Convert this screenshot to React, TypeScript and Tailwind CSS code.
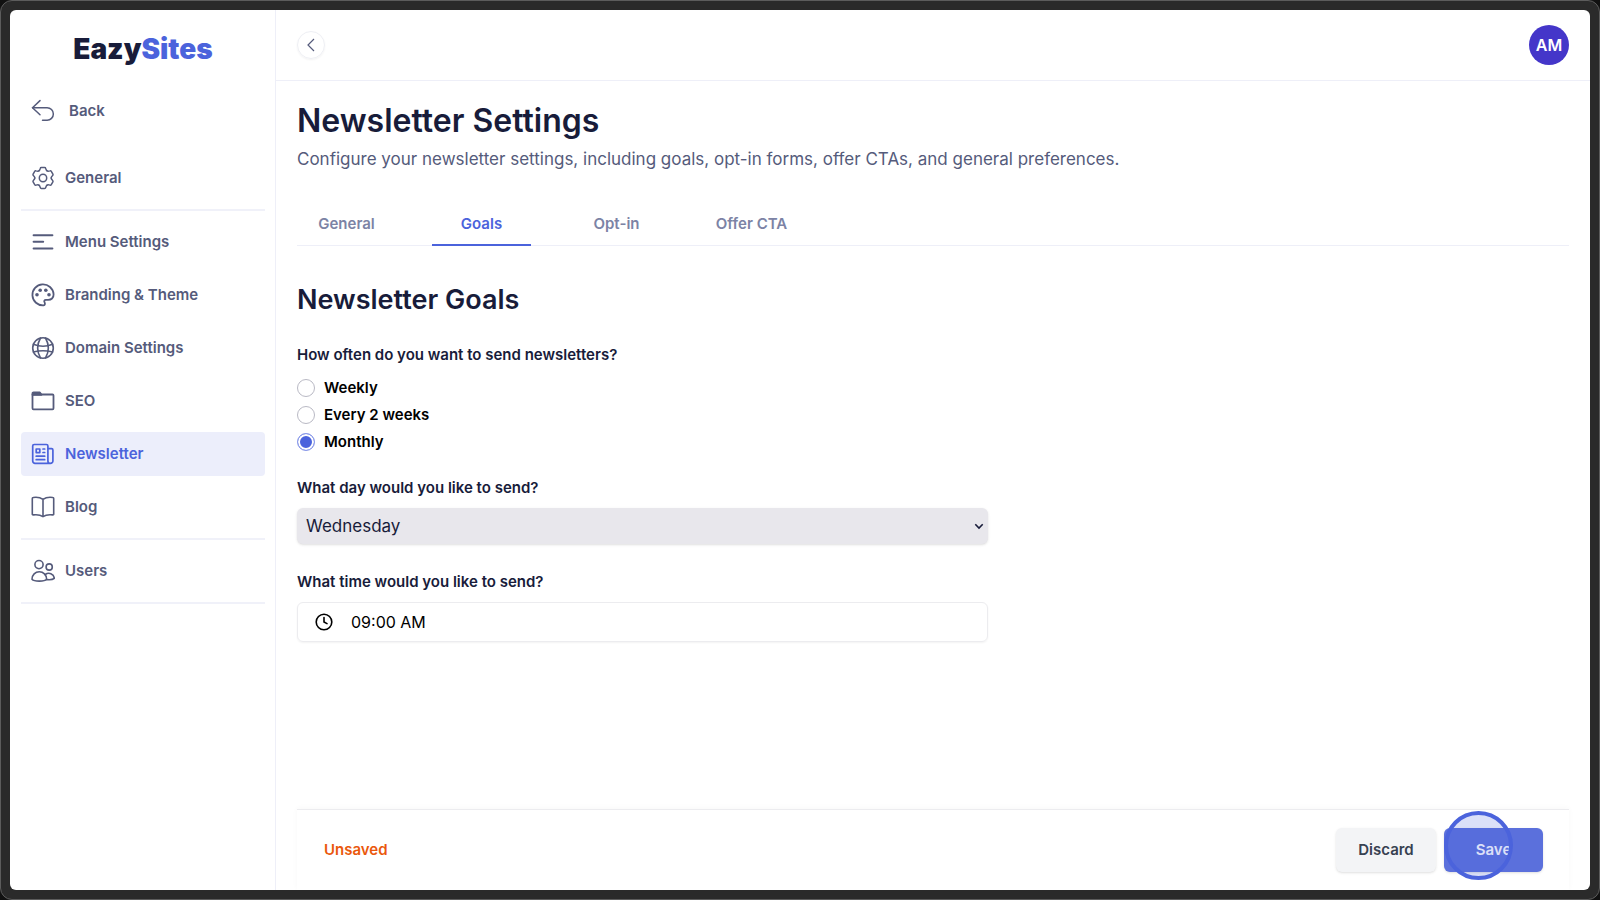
import { useState } from 'react'
import type { ReactNode } from 'react'

const iconProps = {
  width: 24,
  height: 24,
  viewBox: '0 0 24 24',
  fill: 'none',
  stroke: 'currentColor',
  strokeWidth: 1.5,
  strokeLinecap: 'round',
  strokeLinejoin: 'round',
  'aria-hidden': true,
} as const

const BackIcon = () => (
  <svg {...iconProps}>
    <path d="M9 1.6 1.5 8.7 9 15.8" />
    <path d="M1.5 8.7h14.6a6.2 6.2 0 0 1 0 12.5h-4.6" />
  </svg>
)

const GearIcon = () => (
  <svg {...iconProps}>
    {[0, 60, 120, 180, 240, 300].map((angle) => (
      <path
        key={angle}
        transform={`rotate(${angle} 12 12)`}
        d="M7.9 4.9C8.8 4.4 9 3.6 9.3 2.4Q9.5 1.5 10.4 1.5H13.6Q14.5 1.5 14.7 2.4C15 3.6 15.2 4.4 16.1 4.9"
      />
    ))}
    <circle cx="12" cy="12" r="3.7" />
  </svg>
)

const MenuIcon = () => (
  <svg {...iconProps} strokeWidth={2}>
    <path d="M2.6 5.2h18.8M2.6 11.8h9.6M2.6 18.6h18.8" />
  </svg>
)

const PaletteIcon = () => (
  <svg {...iconProps} strokeWidth={1.8}>
    <path d="M12.6 22.4a10.6 10.5 0 1 1 10-11.2c.1 4-2.4 5.6-5.4 5.6h-2.3c-1.6 0-2 1.2-1.4 2.3.8 1.5.5 3.2-.9 3.3z" />
    <g fill="currentColor" stroke="none">
      <circle cx="6" cy="11.7" r="1.8" />
      <circle cx="9.2" cy="7.2" r="1.8" />
      <circle cx="14.8" cy="7.2" r="1.8" />
      <circle cx="18" cy="11.7" r="1.8" />
    </g>
  </svg>
)

const GlobeIcon = () => (
  <svg {...iconProps} strokeWidth={1.6}>
    <circle cx="12" cy="12" r="10.3" />
    <path d="M9.5 2C5.8 8.5 5.8 15.5 9.5 22M14.5 2c3.7 6.5 3.7 13.5 0 20" />
    <path d="M2.4 8.2c5.8 2.4 13.4 2.4 19.2 0M2.4 16c5.8-1.5 13.4-1.5 19.2 0" />
  </svg>
)

const FolderIcon = () => (
  <svg {...iconProps} strokeWidth={1.8}>
    <path d="M1.5 5.5h20a1 1 0 0 1 1 1v12.8a1 1 0 0 1-1 1h-19a1 1 0 0 1-1-1z" />
    <path d="M1.5 5.8V4.4a1 1 0 0 1 1-1h6.4l1.6 2.4z" fill="currentColor" />
  </svg>
)

const NewsIcon = () => (
  <svg {...iconProps} strokeWidth={1.7}>
    <path d="M19.4 21.4H4a2.3 2.3 0 0 1-2.3-2.3V4A1.5 1.5 0 0 1 3.2 2.5h12.2A1.5 1.5 0 0 1 16.9 4v14.9a2.5 2.5 0 0 0 5 0V8a1.3 1.3 0 0 0-1.3-1.3h-3.7" />
    <path d="M5.2 7h3.6v3.6H5.2zM12 7h1.7M12 10.5h1.7M5.2 14.2h8.5M5.2 17.7h8.5" />
  </svg>
)

const BookIcon = () => (
  <svg {...iconProps} strokeWidth={1.6}>
    <path d="M12 4.4C9.5 2.6 5.5 2 2.2 2.5a1 1 0 0 0-.9 1V19a.8.8 0 0 0 .9.9c3.3-.4 7.3 0 9.8 1.7 2.5-1.7 6.5-2.1 9.8-1.7a.8.8 0 0 0 .9-.9V3.5a1 1 0 0 0-.9-1C18.5 2 14.5 2.6 12 4.4zM12 4.4v17.2" />
  </svg>
)

const UsersIcon = () => (
  <svg {...iconProps} strokeWidth={1.6}>
    <circle cx="8" cy="5.6" r="4.1" />
    <circle cx="18.2" cy="8" r="3.1" />
    <path d="M8.3 12.8c-4 0-7.3 3-7.3 7.5 2 2.4 12.6 2.4 14.6 0 0-4.5-3.3-7.5-7.3-7.5z" />
    <path d="M14.3 15.5c3.3-2.5 8.7-1 9 3.9-1.3 1.1-4.7 1.5-7.5 1.2" />
  </svg>
)

type Item = { label: string; icon: ReactNode; active?: boolean }

const groups: Item[][] = [
  [{ label: 'General', icon: <GearIcon /> }],
  [
    { label: 'Menu Settings', icon: <MenuIcon /> },
    { label: 'Branding & Theme', icon: <PaletteIcon /> },
    { label: 'Domain Settings', icon: <GlobeIcon /> },
    { label: 'SEO', icon: <FolderIcon /> },
    { label: 'Newsletter', icon: <NewsIcon />, active: true },
    { label: 'Blog', icon: <BookIcon /> },
  ],
  [{ label: 'Users', icon: <UsersIcon /> }],
]

const tabs = ['General', 'Goals', 'Opt-in', 'Offer CTA']
const frequencies = ['Weekly', 'Every 2 weeks', 'Monthly']
const days = ['Monday', 'Tuesday', 'Wednesday', 'Thursday', 'Friday', 'Saturday', 'Sunday']

function Sidebar() {
  return (
    <aside className="w-[266px] shrink-0 border-r border-[#eeeff8] pr-[10px] pl-[11px] text-[15px] font-semibold text-[#555b7b]">
      <div className="pt-[19px] text-center text-[28px] leading-10 font-black text-[#181c3a]">
        Eazy<span className="text-[#4b63dc]">Sites</span>
      </div>
      <a href="#back" className="mt-5 flex h-11 items-center gap-[14px] px-[10px]">
        <BackIcon />
        Back
      </a>
      <nav className="mt-[23px] flex flex-col gap-[9px]">
        {groups.map((items, i) => (
          <div key={i} className="flex flex-col gap-[9px] border-b-2 border-[#f0f1f9] pb-[9px]">
            {items.map((item) => (
              <a
                key={item.label}
                href="#"
                className={`flex h-11 items-center gap-[10px] rounded px-[10px] ${item.active ? 'bg-[#eceefb] text-[#4b63dc]' : ''}`}
              >
                {item.icon}
                {item.label}
              </a>
            ))}
          </div>
        ))}
      </nav>
    </aside>
  )
}

function GoalsForm() {
  const [frequency, setFrequency] = useState('Monthly')
  const [day, setDay] = useState('Wednesday')
  const [time, setTime] = useState('09:00 AM')

  return (
    <form className="max-w-[691px] text-[15px] font-semibold text-[#181c3a]">
      <fieldset>
        <legend className="leading-6">How often do you want to send newsletters?</legend>
        <div className="mt-[9px] flex flex-col gap-[3px] text-black">
          {frequencies.map((f) => (
            <label key={f} className="flex items-center gap-[9px] leading-6">
              <input
                type="radio"
                name="frequency"
                checked={frequency === f}
                onChange={() => setFrequency(f)}
                className="size-[18px] appearance-none rounded-full border border-[#b9b9c4] bg-white checked:border-[#8d9cea] checked:bg-[#4b63dc] checked:shadow-[inset_0_0_0_2px_white]"
              />
              {f}
            </label>
          ))}
        </div>
      </fieldset>

      <label htmlFor="day" className="mt-[22px] block leading-6">What day would you like to send?</label>
      <div className="relative mt-2">
        <select
          id="day"
          value={day}
          onChange={(e) => setDay(e.target.value)}
          className="block h-9 w-full appearance-none rounded-md bg-[#e8e7ec] px-[9px] pt-[2px] text-[17px] font-normal shadow-sm"
        >
          {days.map((d) => (
            <option key={d}>{d}</option>
          ))}
        </select>
        <svg className="pointer-events-none absolute top-[15px] right-[4px]" width="10" height="7" viewBox="0 0 10 7" fill="none" stroke="currentColor" strokeWidth="1.6" aria-hidden>
          <path d="M1.3 1.3 5 5l3.7-3.7" />
        </svg>
      </div>

      <label htmlFor="time" className="mt-[26px] block leading-6">What time would you like to send?</label>
      <div className="mt-2 flex h-10 items-center rounded-md border border-[#ececef] px-[17px] text-black shadow-xs">
        <svg width="18" height="18" viewBox="0 0 18 18" fill="none" stroke="currentColor" strokeWidth="1.6" strokeLinecap="round" aria-hidden>
          <circle cx="9" cy="9" r="7.8" />
          <path d="M9 4.5V9l3 1.6" />
        </svg>
        <input
          id="time"
          type="text"
          value={time}
          onChange={(e) => setTime(e.target.value)}
          className="ml-[18px] min-w-0 flex-1 text-base font-normal outline-none"
        />
      </div>
    </form>
  )
}

function SaveBar() {
  return (
    <footer className="mt-auto flex h-[81px] items-center gap-2 border-t border-[#ececef] pr-[26px] pl-[27px] text-[15px] font-semibold shadow-[0_-1px_6px_rgba(0,0,0,0.03)]">
      <span className="flex-1 text-[#ea580c]">Unsaved</span>
      <button type="button" className="h-11 w-[100px] rounded-md bg-[#f3f4f6] text-[#374151] shadow-sm">Discard</button>
      <div className="relative">
        <button type="button" className="h-11 w-[99px] rounded-md bg-[#5b70dc] text-white shadow-sm">Save</button>
        {/* click highlight */}
        <span className="pointer-events-none absolute -top-[17px] left-0 size-[69px] rounded-full border-4 border-[#4b63dc] bg-[#4b63dc]/20" />
      </div>
    </footer>
  )
}

export default function App() {
  const [tab, setTab] = useState('Goals')

  return (
    <div className="flex min-h-screen bg-[#111111] font-['Inter','Liberation_Sans',sans-serif]">
      <div className="flex flex-1 rounded-xl border border-[#5c5c5c] bg-[#2a2a2a] p-[9px]">
        <div className="flex flex-1 overflow-hidden rounded-md bg-white">
          <Sidebar />
          <div className="flex min-w-0 flex-1 flex-col">
            <header className="flex h-[71px] shrink-0 items-center justify-between border-b border-[#eeeff8] px-[21px]">
              <button type="button" aria-label="Collapse sidebar" className="flex size-7 items-center justify-center rounded-full border border-[#eeeff4] text-[#555b7b] shadow-xs">
                <svg width="8" height="14" viewBox="0 0 8 14" fill="none" stroke="currentColor" strokeWidth="1.2" aria-hidden>
                  <path d="M7 1 1 7l6 6" />
                </svg>
              </button>
              <div className="flex size-10 items-center justify-center rounded-full bg-[#4436c9] text-base font-semibold text-white">AM</div>
            </header>

            <main className="flex flex-1 flex-col px-[21px] pt-5">
              <h1 className="text-[32px] leading-10 font-semibold text-[#181c3a]">Newsletter Settings</h1>
              <p className="mt-[6px] text-[17px] leading-6 text-[#555b7b]">
                Configure your newsletter settings, including goals, opt-in forms, offer CTAs, and general preferences.
              </p>

              <div role="tablist" className="mt-[30px] flex gap-9 border-b border-[#eeeff8]">
                {tabs.map((t) => (
                  <button
                    key={t}
                    type="button"
                    role="tab"
                    aria-selected={tab === t}
                    onClick={() => setTab(t)}
                    className={`-mb-px h-[45px] w-[99px] border-b-2 pt-[3px] text-[15px] font-semibold whitespace-nowrap ${tab === t ? 'border-[#4b63dc] text-[#4b63dc]' : 'border-transparent text-[#7c83a5]'}`}
                  >
                    {t}
                  </button>
                ))}
              </div>

              <h2 className="mt-9 mb-[25px] text-[27px] leading-9 font-semibold text-[#181c3a]">Newsletter Goals</h2>
              <GoalsForm />
              <SaveBar />
            </main>
          </div>
        </div>
      </div>
    </div>
  )
}
